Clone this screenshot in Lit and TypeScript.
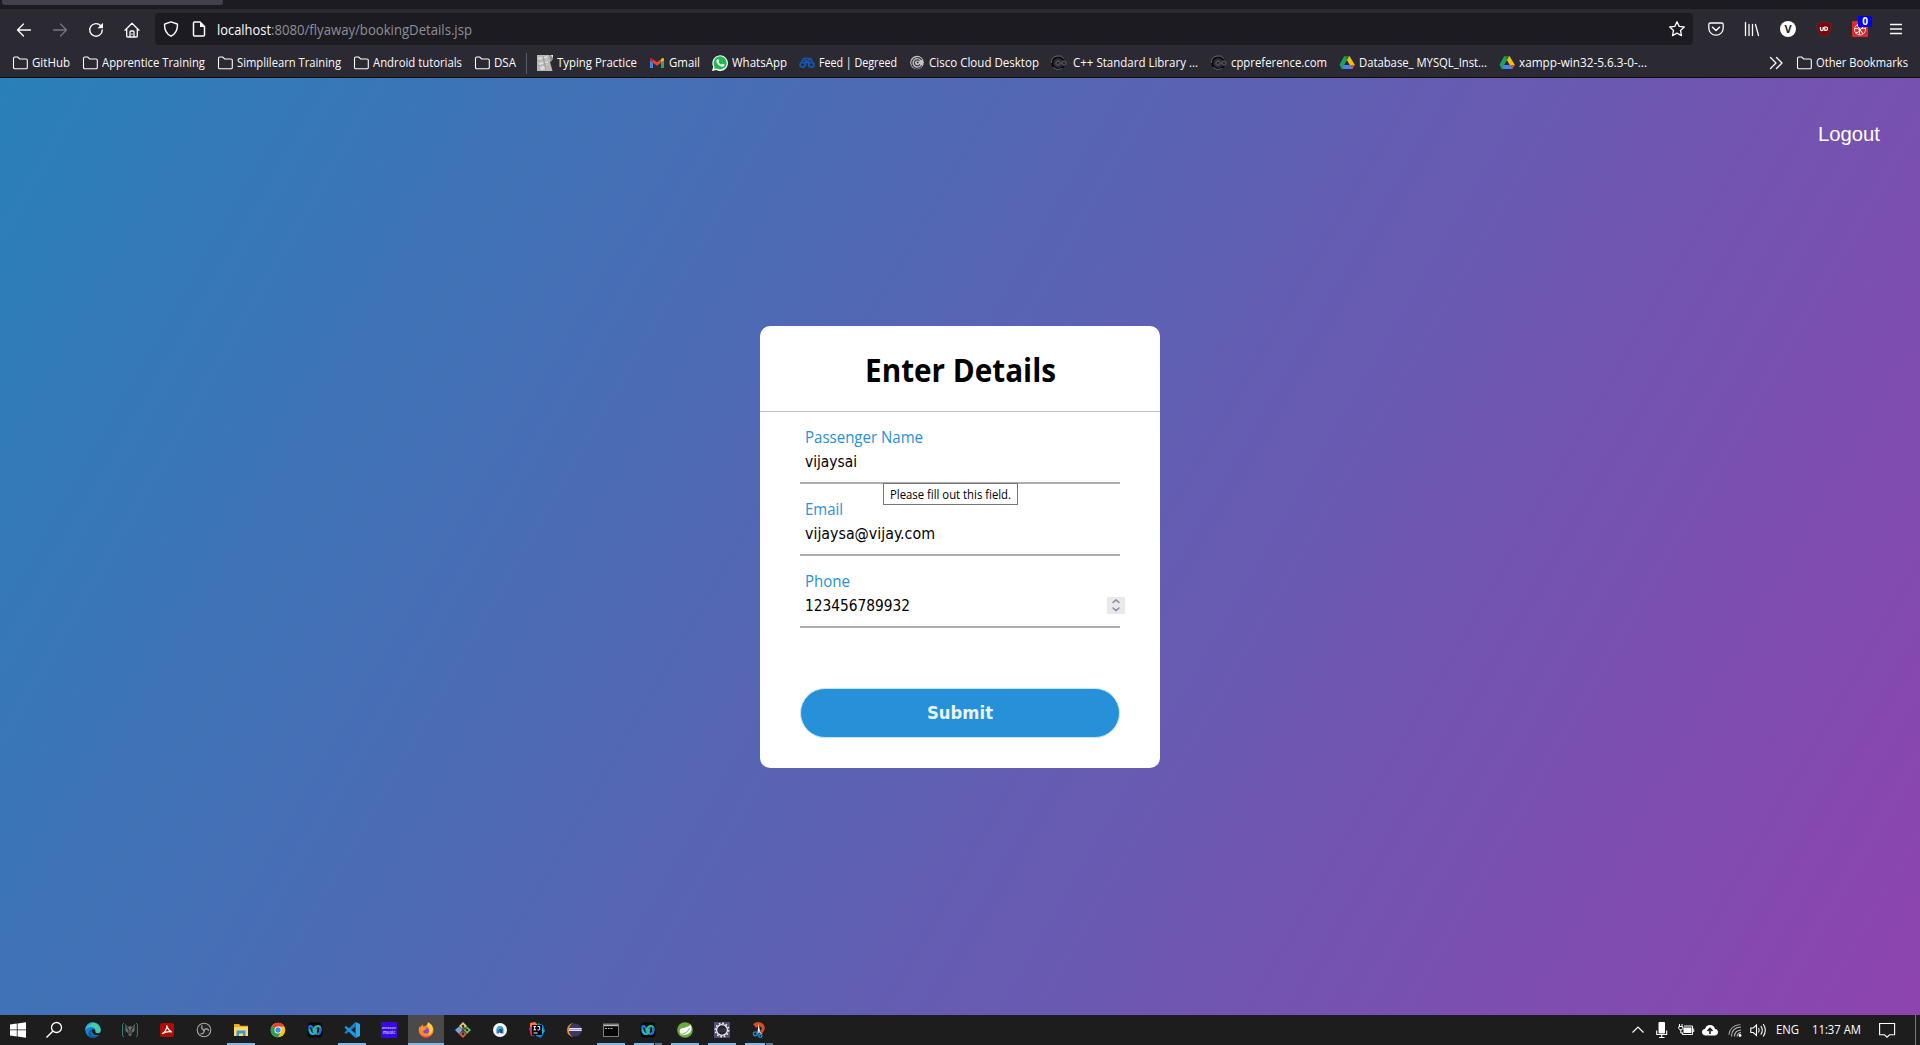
import { LitElement, html, css, svg, TemplateResult, SVGTemplateResult } from "lit";
import { customElement, property, query } from "lit/decorators.js";
import { classMap } from "lit/directives/class-map.js";

/** A single line of text condensed or widened to fill a set width. */
@customElement("fit-text")
class FitText extends LitElement {
  static styles = css`
    :host { display: block; white-space: pre; flex: none; }
    .run { display: inline-block; transform-origin: 0 50%; }
  `;
  @property() text = "";
  @property({ type: Number }) width = 0;
  @query(".run") run!: HTMLElement;
  render() {
    return html`<span class="run">${this.text}</span>`;
  }
  updated() {
    this.style.width = `${this.width}px`;
    this.run.style.transform = "none";
    const natural = this.run.getBoundingClientRect().width;
    this.run.style.transform = `scaleX(${this.width / natural})`;
  }
}

const icon = (body: SVGTemplateResult, cls = "i16") =>
  html`<svg class=${cls} viewBox="0 0 16 16">${body}</svg>`;

const folder = svg`<path d="M1.500 12.500V3.300Q1.500 2 2.800 2h2.900l2 2h6.300q1.300 0 1.300 1.300v7.200q0 1.300-1.300 1.300H2.800q-1.300 0-1.300-1.300z" fill="none" stroke="#fbfbfe" stroke-width="1.1"/>`;
const keyboard = svg`<path d="M0 0h15.500v4L13 7l2.500 9H0z" fill="#b9b9b9"/><path d="M1 3l4-1 1 3-4 1zM7 2l3-1 1 3-3 1zM2 8l4-1 1 3-4 1zM8 7l3-1 1 3-3 1zM3 12l4-1 1 3-4 1z" fill="#dedede"/><path d="M0 6l12-3M1 11l11-3M6 1l3 14" stroke="#8e8e8e" stroke-width=".6"/><path d="M12 0h2l2 4-2 3z" fill="#8b8b8e"/><path d="M14 0h2v3z" fill="#eee"/>`;
const gmail = svg`<path d="M1 3.500v9.500h3V7z" fill="#4285f4"/><path d="M15 3.500v9.500h-3V7z" fill="#34a853"/><path d="M12 7V4.200l1-.9q2-.8 2 1.200v1z" fill="#fbbc04"/><path d="M4 4.300l4 3 4-3V7.800l-4 3-4-3z" fill="#ea4335"/><path d="M1 5.500v-1q0-2 2-1.200l1 1v3.500z" fill="#c5221f"/>`;
const whatsapp = svg`<path d="M0 16l1.200-4.300A7.800 7.800 0 1 1 4.400 15z" fill="#fff"/><circle cx="8.100" cy="7.900" r="6.600" fill="#20b954"/><path d="M2 14l.8-3 2.500 2.200z" fill="#20b954"/><path d="M5.200 4.300q.8-.6 1.300.2l.6 1.400q0 .5-.7 1.100 1 2 2.900 2.700l.8-.9q.4-.3 1 .1l1.200.7q.4.300 0 1.200-1 1.500-3 .8Q5.500 10 4.500 7.200q-.5-1.900.7-2.900z" fill="#fff"/>`;
const degreed = svg`<g fill="none" stroke="#1757b8" stroke-width="1.700"><ellipse cx="3.700" cy="9.800" rx="2.700" ry="2.300"/><ellipse cx="12.300" cy="9.800" rx="2.700" ry="2.300"/><path d="M3 7.500Q3 3.500 6 3.500h4q3 0 3 4M5.500 5l5.500 4M10.500 5L5 9"/></g>`;
const cisco = svg`<circle cx="8" cy="7.500" r="6.800" fill="#c4c4c4"/><path d="M12.800 5A5.400 5.400 0 1 0 13 10.500M10.500 5.700a3 3 0 1 0 .5 3.500" fill="none" stroke="#3b3b42" stroke-width="1.200"/><circle cx="8.700" cy="7.500" r="1" fill="#333"/>`;
const cpp = svg`<circle cx="7.300" cy="8" r="6" fill="none" stroke="#09090c" stroke-width="2"/><path d="M.3 8A7 7 0 0 1 12.800 3.500M2 12.500q4 3.500 9 1.200" fill="none" stroke="#6d6f7d" stroke-width=".9"/><path d="M4.500 8h5M7 5.500v5M10.500 8h5M13 5.500v5" stroke="#858796" stroke-width="2.300"/><path d="M4.500 8h5M7 5.500v5M10.500 8h5M13 5.500v5" stroke="#08080b"/>`;
const drive = svg`<path d="M5.300 1h5.200L16 10.300h-5L7.800 5z" fill="#fbbc04"/><path d="M5.300 1L0.500 9.800l2.300 4.200L8 5z" fill="#1da25b"/><path d="M5.300 1h5.200L8 5z" fill="#188038"/><path d="M4.800 10H15.500l-2.300 4H2.800z" fill="#4285f4"/><path d="M11.500 10h4.200l-2.500 4z" fill="#ea4335"/>`;

interface Mark { art: SVGTemplateResult; label: string; at: number; text: number; width: number; }
const marks: Mark[] = [
  { art: folder, label: "GitHub", at: 12, text: 32, width: 38 },
  { art: folder, label: "Apprentice Training", at: 82, text: 102, width: 103 },
  { art: folder, label: "Simplilearn Training", at: 217, text: 237, width: 104 },
  { art: folder, label: "Android tutorials", at: 353, text: 373, width: 89 },
  { art: folder, label: "DSA", at: 474, text: 494, width: 22 },
  { art: keyboard, label: "Typing Practice", at: 537, text: 557, width: 80 },
  { art: gmail, label: "Gmail", at: 649, text: 669, width: 31 },
  { art: whatsapp, label: "WhatsApp", at: 712, text: 732, width: 55 },
  { art: degreed, label: "Feed | Degreed", at: 799, text: 819, width: 78 },
  { art: cisco, label: "Cisco Cloud Desktop", at: 909, text: 929, width: 110 },
  { art: cpp, label: "C++ Standard Library ...", at: 1051, text: 1073, width: 125 },
  { art: cpp, label: "cppreference.com", at: 1211, text: 1231, width: 96 },
  { art: drive, label: "Database_ MYSQL_Inst...", at: 1339, text: 1359, width: 128 },
  { art: drive, label: "xampp-win32-5.6.3-0-...", at: 1499, text: 1519, width: 128 },
];
const otherBookmarks: Mark = { art: folder, label: "Other Bookmarks", at: 1796, text: 1816, width: 92 };

const edge = svg`<circle cx="8" cy="8" r="7.800" fill="#1683d0"/><path d="M.3 7.500A7.800 7.800 0 0 1 15.800 8q0 3.200-3.800 3-2.500 0-1.800-2Q10.500 5.500 7 5 3 4.500.3 7.500z" fill="#45cda4"/><path d="M.3 7.500A7.800 7.800 0 0 1 9 .3Q4 3 .3 7.500z" fill="#26b1d6"/><path d="M6.500 7Q4.500 11 8 13.500q3 1.500 6-.8A7.800 7.800 0 0 1 5 15Q1 11 6.500 7z" fill="#1459a8"/><path d="M6.700 7.500q2.800-1.500 3.600 1-.5 2 1.500 2.700 2 .5 4-.7-.5 1.700-2 2.500-5 1-6.800-2.500-.9-2-.3-3z" fill="#1c1c1c"/>`;
const predator = svg`<path d="M2 1L.6 2.500v11L2 15M14 1l1.400 1.500v11L14 15" fill="none" stroke="#2c8985" stroke-width="1"/><path d="M3 2l3 3 2-1 2 1 3-3-.5 7L10 11l-1 3H7l-1-3-2.500-2z" fill="#6c6c6c"/><path d="M5 6l2 2v4M11 6L9 8v4M3.500 4l3 3M12.500 4l-3 3" stroke="#242424" fill="none"/>`;
const acrobat = svg`<rect x="1" y="1" width="14" height="14" rx="2.500" fill="#b30b00"/><path d="M7.500 3.500q1.500 4.500 5 6.500-4-1-9 1.500 4-2.500 4.500-7.500" fill="none" stroke="#fff" stroke-width="1.200" stroke-linejoin="round"/>`;
const obs = svg`<circle cx="8" cy="8" r="6.800" fill="#242424" stroke="#a5a5a5" stroke-width="1.100"/><path d="M8 8Q4.500 7 6.200 3.300M8 8q2.700-2.500 5 .7M8 8q.8 3.600-3.700 4" fill="none" stroke="#aaa" stroke-width="1.200"/><circle cx="8" cy="8" r="1.200" fill="#999"/>`;
const explorer = svg`<path d="M1 2h5l1.500 1.700H15V14H1z" fill="#e8a92e"/><path d="M1 5h14v9H1z" fill="#ffd868"/><path d="M3.500 14V8.500h9V14h-2.500v-2.500H6V14z" fill="#3597d6"/>`;
const chrome = svg`<circle cx="8" cy="8" r="7.300" fill="#f8c51c"/><path d="M8 8L1.700 4.300A7.300 7.300 0 0 1 14.300 4.400H8z" fill="#e34133"/><path d="M1.700 4.300A7.300 7.300 0 0 0 8 15.300l3-5.500L8 8z" fill="#2aa34d"/><circle cx="8" cy="8" r="3.500" fill="#fff"/><circle cx="8" cy="8" r="2.700" fill="#4688f0"/>`;
const webex = svg`<rect x=".5" y=".5" width="15" height="15" rx="3.500" fill="#050b0c"/><g fill="none" stroke-width="2.200" stroke-linecap="round"><path d="M9.500 5.500Q9 12 6 12 3 12 2.300 6.500 2 4.200 3.500 4 5 4 6 7" stroke="#2377ee"/><path d="M2.600 8.500Q3.500 12 6 12 8 12 9 8" stroke="#27b3c4"/><path d="M6.500 9.500Q7.500 4 10.500 4q3.300 0 3 3.500-.4 4.500-3 4.500-1.500 0-2-1.500" stroke="#31c07d"/><path d="M13.500 6.500Q13.500 12 10.500 12" stroke="#2a62ea"/></g>`;
const vscode = svg`<path d="M11.500 0L16 2v12l-4.500 2z" fill="#28a7ed"/><path d="M11.500 0v4.500L2 12 .4 10.500z" fill="#1484cd"/><path d="M11.500 16v-4.500L2 4 .4 5.500z" fill="#1f9ae3"/>`;
const music = svg`<rect width="16" height="16" rx="1" fill="#3b08df"/><text x="8" y="7" text-anchor="middle" font-size="3.600" font-weight="700" fill="#bca9ff">amazon</text><text x="8" y="11.500" text-anchor="middle" font-size="4.300" font-weight="700" fill="#bca9ff">music</text>`;
const firefox = svg`<path d="M12 3.500Q12 1.500 10.500.5 15 3 15.500 7.500 15.800 12.500 11 14.800 5 16.800 1.800 12 -.5 8 2 3.800l.8 1.500L4.300 2.300l1.300 2.200Q8 4 9 2.500L10 0z" fill="#ff8a26"/><path d="M10.500.3Q16 4 14.500 9q-1 3.500-4 4.500Q13 9 10 5.500 8.700 3 10.500.3z" fill="#ffd13b"/><path d="M1 7q0 6 6 7.500 5 .3 7-3.500-2 4.800-6 4.800Q1.500 15 1 7z" fill="#f23d61"/><circle cx="8" cy="8.500" r="2.900" fill="#8b46d2"/><path d="M4 6q3-1.300 5 .2l-2 1.300Q6 8 6 9 4 8 4 6z" fill="#ff9b25"/>`;
const git = svg`<path d="M8 0l4 4-4 4-4-4z" fill="#e8c774"/><path d="M4 4.500l3.500 3.500L4 12 0 8z" fill="#73a9de"/><path d="M8 8.500l3.500 3.700L8 16l-4-3.800z" fill="#e4563f"/><path d="M12 4.500L16 8l-4 4-3.500-4z" fill="#71ba61"/><path d="M8 3v9M8 5l4 3" stroke="#3d3d3d" stroke-width="1.200"/><g fill="#333"><circle cx="8" cy="4" r="1.200"/><circle cx="12" cy="8" r="1.200"/><circle cx="8" cy="12" r="1.300"/></g>`;
const android = svg`<circle cx="8" cy="8" r="7" fill="#f5f8fa"/><path d="M4.500 11.500V7.500Q5 4 8 4t3.500 3.500v4h-2.300L8 9.500l-1.200 2z" fill="#3577bb"/><path d="M4.500 7.500Q5 4 8 4q2 0 2.500 1.500L7 8z" fill="#2eb7d0"/><path d="M7 7h3v4H8z" fill="#1d4a80"/>`;
const idea = svg`<path d="M1 1l5-1 4 4-2 9-7-2z" fill="#f77838"/><path d="M0 6l5-2 2 9-5 1z" fill="#dc2d68"/><path d="M9 1l5 2 2 6-4 7-5-2z" fill="#1680df"/><path d="M12 4l3 5-3 5z" fill="#1eb7ed"/><rect x="3" y="3" width="10" height="10" fill="#050505"/><path d="M4.500 4.500h2.500M5.700 4.500v3.300M4.500 7.800h2.500M8.500 4.500h2.200v3q-.2 1-2.200.4M4.500 11h4" stroke="#fff" fill="none"/>`;
const eclipse = svg`<path d="M8 .8Q1 2 1 8t7 7.200Q3 13 3 8T8 .8z" fill="#e98f2b"/><circle cx="9.300" cy="8" r="6.500" fill="#3d356b"/><path d="M3 6h12.800v1.100H3zM2.700 8h13.100v1.100H2.700z" fill="#e2e0ee"/><path d="M3 7h12.500v1H3z" fill="#aaa5bd"/>`;
const cmd = svg`<rect x=".5" y="2" width="15" height="12.500" fill="#060606" stroke="#9b9b9b" stroke-width=".8"/><path d="M1 2.500h14v1.700H1z" fill="#bcbcbc"/><path d="M2 6.500h2M5 6.500h1.500M7.500 6.500h2" stroke="#bbb"/>`;
const spring = svg`<circle cx="8" cy="8" r="7.800" fill="#65ad3b"/><path d="M14 2.500Q15.500 9 12 11.500 8 14 3 12.800l1-1Q1 9 4.500 6.300 11 5.300 14 2.500z" fill="#fff"/><path d="M4 12.500Q10 11.500 13 6" fill="none" stroke="#65ad3b" stroke-width=".9"/>`;
const gear = svg`<rect width="16" height="16" fill="#544a78"/><circle cx="8" cy="8" r="5.400" fill="#25222f" stroke="#eee" stroke-width="1.300"/><circle cx="8" cy="8" r="6.700" fill="none" stroke="#eee" stroke-width="1.500" stroke-dasharray="1.700 1.808"/><path d="M3.500 7h9M3.500 9h9" stroke="#4b4266" stroke-width=".8"/>`;
const snip = svg`<path d="M2 2q6-4 10 0 4 4-.5 9L9 9q3-2 1-4-3-2-5 1z" fill="#d54e24"/><path d="M7.500 2L6.500 10h2.800z" fill="#eee"/><path d="M7.500 9L11 12M8.500 9L6 12" stroke="#b9cbd9" stroke-width="1.300"/><circle cx="4.300" cy="11.800" r="1.900" fill="none" stroke="#2587d5" stroke-width="1.400"/><circle cx="9.300" cy="13.800" r="1.600" fill="none" stroke="#2587d5" stroke-width="1.400"/>`;

const tasks: { art: SVGTemplateResult; open?: boolean; active?: boolean; stacked?: boolean }[] = [
  { art: edge }, { art: predator }, { art: acrobat }, { art: obs }, { art: explorer, open: true },
  { art: chrome }, { art: webex }, { art: vscode, open: true }, { art: music },
  { art: firefox, active: true, open: true }, { art: git }, { art: android }, { art: idea }, { art: eclipse },
  { art: cmd, open: true }, { art: webex, open: true, stacked: true }, { art: spring, open: true },
  { art: gear, open: true }, { art: snip, open: true, stacked: true },
];

const line = (d: string, w = 1.3) =>
  svg`<path d=${d} fill="none" stroke="currentColor" stroke-width=${w} stroke-linecap="round" stroke-linejoin="round"/>`;

@customElement("app-root")
class AppRoot extends LitElement {
  static styles = css`
    :host { display: flex; flex-direction: column; width: 1920px; height: 1045px; overflow: hidden; font-family: "Open Sans", "Noto Sans", sans-serif; }
    * { box-sizing: border-box; }
    svg { display: block; flex: none; overflow: visible; }
    .i16 { width: 16px; height: 16px; }
    .tabs { height: 9px; background: #1c1b22; flex: none; padding-left: 2px; }
    .tab { width: 221px; height: 5px; background: #42414d; border-radius: 0 0 3px 3px; }
    .tools { height: 40px; flex: none; background: #2b2a33; color: #fbfbfe; display: flex; align-items: center; padding: 0 15px 0 16px; }
    .nav { display: flex; gap: 20px; width: 139px; align-items: center; padding-top: 1px; }
    .dim { color: #76757e; }
    .address { width: 1538px; height: 32px; border-radius: 4px; background: #1c1b22; display: flex; align-items: center; padding: 0 8px; }
    .page-icon { margin-left: 12px; }
    .host { margin-left: 10px; font-size: 14.500px; line-height: 20px; padding-top: 2px; }
    .path { font-size: 14.500px; line-height: 20px; color: #8f8f96; padding-top: 2px; }
    .star { margin-left: auto; }
    .extensions { display: flex; align-items: center; gap: 20px; margin-left: 15px; }
    .badged { position: relative; }
    .badge { position: absolute; left: 6px; top: -5px; width: 14px; height: 11px; background: #0000f0; border-radius: 1px; color: #fff; font: 700 10px/11px "Open Sans", sans-serif; text-align: center; }
    .marks { height: 29px; flex: none; background: #2b2a33; border-bottom: 1px solid #0c0c0d; display: grid; grid-template-columns: 12px 70px 135px 136px 121px 63px 112px 63px 87px 110px 142px 160px 128px 160px 270px 27px auto; align-items: center; color: #fbfbfe; font-size: 12px; line-height: 16px; }
    .mark { display: flex; align-items: center; gap: 4px; }
    .mark.far { gap: 6px; }
    .mark.last-folder { border-right: 1px solid #5b5b66; width: 53px; height: 21px; }
    .page { height: 937px; flex: none; background: linear-gradient(120deg, #2980b9, #8e44ad); display: flex; flex-direction: column; align-items: center; }
    .logout { align-self: flex-end; margin: 44px 40px 0 0; height: 24px; font: 20.800px/24px "Liberation Sans", sans-serif; color: #fff; }
    .card { margin-top: 180px; width: 400px; height: 442px; background: #fff; border-radius: 10px; flex: none; }
    .head { height: 86px; border-bottom: 1px solid silver; display: flex; justify-content: center; padding-top: 22px; font-size: 32px; line-height: 44px; font-weight: 700; color: #000; }
    .form { padding: 0 40px; }
    .field { height: 72px; border-bottom: 2px solid #adadad; padding: 15px 5px 0; position: relative; }
    .label { font-size: 16px; line-height: 20px; color: #2691d9; }
    .value { font-family: "DejaVu Sans Condensed", "DejaVu Sans", sans-serif; font-stretch: condensed; font-size: 16px; line-height: 20px; color: #000; margin-top: 5px; }
    .spinner { position: absolute; right: -5px; top: 41px; width: 18px; height: 17px; background: #e9e9ed; color: #8f8f9d; }
    .spinner svg { width: 18px; height: 17px; }
    .tip { position: absolute; z-index: 2; left: 83px; top: 71px; width: 135px; height: 22px; border: 1px solid #767676; background: #fff; color: #000; font-size: 12px; line-height: 21px; padding-left: 6px; }
    .submit { margin-top: 60px; width: 320px; height: 50px; border: 1px solid #c4e6fa; border-radius: 25px; background: #2691d9; color: #e9f4fb; display: flex; align-items: center; justify-content: center; font-family: "DejaVu Sans", sans-serif; font-weight: 700; font-size: 18px; line-height: 24px; padding-bottom: 1px; }
    .taskbar { height: 30px; flex: none; background: #1d1d1d; color: #fff; display: flex; align-items: stretch; }
    .start, .search { display: flex; align-items: center; justify-content: center; width: 36px; }
    .search { margin-right: 3px; }
    .task { width: 36px; margin-right: 1px; display: flex; flex-direction: column; align-items: center; padding-top: 7px; }
    .active { background: #4a4a4a; }
    .underline { width: 28px; height: 2px; margin-top: 5px; background: #80b8e6; display: flex; justify-content: flex-end; }
    .active .underline { width: 36px; }
    .stack { width: 8px; height: 2px; background: #52789a; border-left: 1px solid #1d1d1d; }
    .tray { margin-left: auto; display: grid; grid-template-columns: 24px 24px 24px 25px 23px 26px 36px 67px 36px 5px; align-items: center; font-size: 12px; line-height: 16px; }
    .peek { border-left: 1px solid #777; align-self: stretch; }
  `;

  private mark(m: Mark, i = -1): TemplateResult {
    return html`<div class=${classMap({ mark: true, far: m.text - m.at > 20, "last-folder": i === 4 })}>
      ${icon(m.art)}<fit-text .text=${m.label} .width=${m.width}></fit-text>
    </div>`;
  }

  render() {
    return html`
      <div class="tabs"><div class="tab"></div></div>
      <div class="tools">
        <div class="nav">
          ${icon(line("M14.500 8H1.500M7.500 2L1.500 8l6 6"))}
          <span class="dim">${icon(line("M1.500 8h13M8.500 2l6 6-6 6"))}</span>
          ${icon(svg`${line("M12.800 3.800A6.300 6.300 0 1 0 14.300 8", 1.400)}<path d="M15 .8v5.500H9.500z" fill="currentColor"/>`)}
          ${icon(svg`${line("M1 8.200L8 1.200l7 7M2.700 7v7q0 1 1 1h8.600q1 0 1-1V7")}${line("M6 14.500V10q0-1 1-1h2q1 0 1 1v4.500M8 12v.3")}`)}
        </div>
        <div class="address">
          ${icon(line("M8 .8L14.200 3q.3 0 .3.700Q14.500 12 8 15.200 1.500 12 1.500 3.700q0-.7.3-.7z", 1.4))}
          <span class="page-icon">${icon(svg`${line("M2.500 2q0-1 1-1H9l4.500 4.500V14q0 1-1 1h-9q-1 0-1-1z", 1.5)}<path d="M9 1l4.500 5H9z" fill="currentColor"/>`)}</span>
          <fit-text class="host" .text=${"localhost"} .width=${54}></fit-text>
          <fit-text class="path" .text=${":8080/flyaway/bookingDetails.jsp"} .width=${201}></fit-text>
          <span class="star">${icon(line("M8 .7l2.200 4.700 5.100.6-3.800 3.500 1 5.100L8 12.100l-4.500 2.500 1-5.100L.7 6l5.100-.6z"))}</span>
        </div>
        <div class="extensions">
          ${icon(svg`${line("M2.300 2h11.400q1.500 0 1.500 1.500V7A7.200 7.200 0 0 1 .8 7V3.500Q.8 2 2.300 2z")}${line("M4.500 6.200L8 9.500l3.500-3.300", 1.500)}`)}
          ${icon(line("M1.500 1.500v13M5 3.500v11M8.500 3.500v11M11.500 3.500l3 11"))}
          ${icon(svg`<circle cx="8" cy="8" r="8" fill="#fff"/><text x="8" y="12" text-anchor="middle" font-size="11" font-weight="700" fill="#26252c">V</text>`)}
          ${icon(svg`<path d="M8 .5q3 2 7 2Q16 12 8 16 0 12 1 2.500q4 0 7-2z" fill="#800308" stroke="#62333b" stroke-width=".6"/><path d="M4.500 6v2.200q0 1.300 1.300 1.300T7.200 8.200V6" fill="none" stroke="#fff" stroke-width="1.300"/><path d="M8.800 6h1q1.800 0 1.800 1.700T9.800 9.400h-1z" fill="none" stroke="#fff" stroke-width="1.200"/>`)}
          <div class="badged">
            ${icon(svg`<rect width="16" height="16" rx="1" fill="#d92b2e"/><g fill="none" stroke="#fff" stroke-width="1"><circle cx="8" cy="8.500" r="5.500" stroke="#f8c1c1"/><path d="M2 8q3-2 6 1l4-4M3 12q4 0 5-3t6-1M7 14l1-5M11 13L5 4"/></g>`)}
            <span class="badge">0</span>
          </div>
          ${icon(svg`<path d="M2 3.500h12M2 8h12M2 12.500h12" stroke="currentColor" stroke-width="1.300"/>`)}
        </div>
      </div>
      <div class="marks">
        <span></span>
        ${marks.map((m, i) => this.mark(m, i))}
        ${icon(line("M1.500 2.500L7 8l-5.500 5.500M7.500 2.500L13 8l-5.500 5.500"))}
        ${this.mark(otherBookmarks)}
      </div>
      <main class="page">
        <fit-text class="logout" .text=${"Logout"} .width=${62}></fit-text>
        <section class="card">
          <div class="head"><fit-text .text=${"Enter Details"} .width=${191}></fit-text></div>
          <div class="form">
            <div class="field">
              <fit-text class="label" .text=${"Passenger Name"} .width=${118}></fit-text>
              <fit-text class="value" .text=${"vijaysai"} .width=${52}></fit-text>
              <div class="tip"><fit-text .text=${"Please fill out this field."} .width=${121}></fit-text></div>
            </div>
            <div class="field">
              <fit-text class="label" .text=${"Email"} .width=${38}></fit-text>
              <fit-text class="value" .text=${"vijaysa@vijay.com"} .width=${130}></fit-text>
            </div>
            <div class="field">
              <fit-text class="label" .text=${"Phone"} .width=${45}></fit-text>
              <fit-text class="value" .text=${"123456789932"} .width=${105}></fit-text>
              <div class="spinner"><svg viewBox="0 0 18 17">${line("M6 5.500L9 2.800l3 2.700M6 11l3 2.700 3-2.700", 1.600)}</svg></div>
            </div>
            <div class="submit"><fit-text .text=${"Submit"} .width=${66}></fit-text></div>
          </div>
        </section>
      </main>
      <footer class="taskbar">
        <div class="start">${icon(svg`<path d="M0 2.500L6.800 1.500v6H0zM7.600 1.400L16 .2v7.300H7.600zM0 8.300h6.800v6.100L0 13.400zM7.600 8.300H16v7.500l-8.400-1.200z" fill="#fff"/>`)}</div>
        <div class="search">${icon(svg`<circle cx="10.500" cy="5.500" r="5" fill="none" stroke="#fff" stroke-width="1.300"/><path d="M7 9L.5 15.500" stroke="#fff" stroke-width="1.400"/>`)}</div>
        ${tasks.map((t) => html`<div class=${classMap({ task: true, active: !!t.active })}>
          ${icon(t.art)}${t.open ? html`<div class="underline">${t.stacked ? html`<div class="stack"></div>` : ""}</div>` : ""}
        </div>`)}
        <div class="tray">
          ${icon(svg`<path d="M2.500 10.500L8 5l5.500 5.500" fill="none" stroke="#fff" stroke-width="1.200"/>`)}
          ${icon(svg`<rect x="4.500" y="0" width="6.500" height="11.500" rx="1" fill="#fff"/><path d="M2.700 8.500v4h10v-4M7.700 12.500v3M5 15.500h5.500" fill="none" stroke="#fff" stroke-width="1.100"/>`)}
          ${icon(svg`<rect x="5.500" y="5.500" width="8" height="5.500" fill="#fff"/><path d="M6 4h8.500v8.500H4.500V10.500M15.700 6.500v3.500M1.500 2v2M4 2v2M.8 4.500h4v2l-1 1.300h-2l-1-1.300zM2.800 8v3h1.500" fill="none" stroke="#fff" stroke-width="1"/>`)}
          ${icon(svg`<path d="M4 13.500q-4-.3-4-3.500 0-2.700 3-3 1-4 5-4t5 4q3 .3 3 3.200 0 3-3.500 3.300z" fill="#fff"/><path d="M8 12V7.500M5.500 9L8 6.500 10.500 9" fill="none" stroke="#1d1d1d" stroke-width="1.600"/>`)}
          ${icon(svg`<g fill="none" stroke="#bbb" stroke-width="1.100"><path d="M4.500 14.500Q4.500 5.500 14 5M7.500 14.500Q7.500 8.500 14 8M10.200 14.500q0-3.500 3.800-4"/><path d="M2 13Q2.500 3.500 13.500 2.500" stroke="#999"/></g><circle cx="13" cy="13.500" r="1.400" fill="#fff"/>`)}
          ${icon(svg`<path d="M.8 6h2.500L6.500 3v10.500L3.300 10.500H.8zM8.500 6q1.500 2.200 0 4.500M10.800 4q3 4.200 0 8.500M13.200 2q4.300 6.200 0 12.500" fill="none" stroke="#fff" stroke-width="1.100"/>`)}
          <fit-text .text=${"ENG"} .width=${23}></fit-text>
          <fit-text .text=${"11:37 AM"} .width=${49}></fit-text>
          ${icon(svg`<path d="M.6 1.500h15v11.300h-5L8 15.200l-2.500-2.400H.6z" fill="none" stroke="#fff" stroke-width="1.100"/>`)}
          <span class="peek"></span>
        </div>
      </footer>
    `;
  }
}
